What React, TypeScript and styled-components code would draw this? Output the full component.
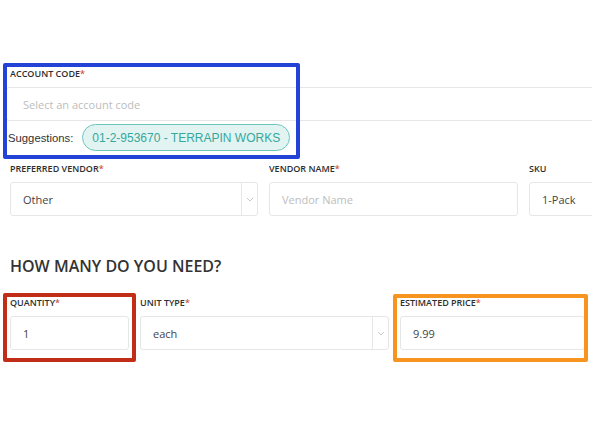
import React from 'react';
import styled, { createGlobalStyle } from 'styled-components';

const GlobalStyle = createGlobalStyle`
  html, body {
    margin: 0;
    padding: 0;
    background: #ffffff;
  }
  body {
    font-family: 'Open Sans', 'Liberation Sans', sans-serif;
    color: #333333;
  }
`;

const Chevron = () => (
  <svg width="8" height="5" viewBox="0 0 8 5" fill="none">
    <path d="M1 1l3 3 3-3" stroke="#c4c4c4" strokeWidth="0.9" />
  </svg>
);

const App = () => (
  <>
    <GlobalStyle />
    <Page>
      <AccountSection>
        <Label>
          Account Code<Req>*</Req>
        </Label>
        <AccountInput>Select an account code</AccountInput>
        <SuggestionRow>
          <SuggestionLabel>Suggestions:</SuggestionLabel>
          <Pill>01-2-953670 - TERRAPIN WORKS</Pill>
        </SuggestionRow>
        <Frame $color="#2342d6" $top={-5} $left={-7} $width={297} $height={96} />
      </AccountSection>

      <Row>
        <Field $width={248}>
          <Label>
            Preferred Vendor<Req>*</Req>
          </Label>
          <Select>
            <Value>Other</Value>
            <Arrow>
              <Chevron />
            </Arrow>
          </Select>
        </Field>
        <Field $width={249}>
          <Label>
            Vendor Name<Req>*</Req>
          </Label>
          <Input $placeholder>Vendor Name</Input>
        </Field>
        <Field $width={249}>
          <Label>SKU</Label>
          <Input>1-Pack</Input>
        </Field>
      </Row>

      <Heading>How many do you need?</Heading>

      <Row>
        <Field $width={119}>
          <Label>
            Quantity<Req>*</Req>
          </Label>
          <Input>1</Input>
          <Frame $color="#c12d17" $top={-4} $left={-7} $width={133} $height={69} />
        </Field>
        <Field $width={249}>
          <Label>
            Unit Type<Req>*</Req>
          </Label>
          <Select>
            <Value>each</Value>
            <Arrow>
              <Chevron />
            </Arrow>
          </Select>
        </Field>
        <Field $width={185}>
          <Label>
            Estimated Price<Req>*</Req>
          </Label>
          <Input>9.99</Input>
          <Frame $color="#f7931f" $top={-3} $left={-7} $width={195} $height={68} />
        </Field>
      </Row>
    </Page>
  </>
);

export default App;

const Page = styled.div`
  width: 592px;
  height: 444px;
  box-sizing: border-box;
  padding: 68px 0 0 10px;
  overflow: hidden;
`;

const AccountSection = styled.section`
  position: relative;
  display: flex;
  flex-direction: column;
`;

const Label = styled.div`
  font-size: 9px;
  font-weight: 600;
  line-height: 12px;
  text-transform: uppercase;
  color: #2e2e2e;
  white-space: nowrap;
  margin-bottom: 7px;
`;

const Req = styled.span`
  color: #d0564a;
`;

const AccountInput = styled.div`
  width: 620px;
  height: 34px;
  margin-left: -4px;
  box-sizing: border-box;
  border: 1px solid #e6e6e6;
  border-radius: 3px;
  padding-left: 16px;
  display: flex;
  align-items: center;
  font-size: 11px;
  color: #bdbdbd;
`;

const SuggestionRow = styled.div`
  display: flex;
  align-items: center;
  gap: 9px;
  margin: 3px 0 0 -2px;
`;

const SuggestionLabel = styled.span`
  font-family: 'Liberation Sans', Arial, sans-serif;
  font-size: 11.3px;
  color: #333333;
`;

const Pill = styled.span`
  height: 27px;
  box-sizing: border-box;
  padding: 0 9px;
  display: flex;
  align-items: center;
  border: 1px solid #6dc4bc;
  border-radius: 14px;
  background: #e2f4f2;
  color: #35a79d;
  font-family: 'Liberation Sans', Arial, sans-serif;
  font-size: 12px;
  white-space: nowrap;
`;

const Frame = styled.div<{ $color: string; $top: number; $left: number; $width: number; $height: number }>`
  position: absolute;
  top: ${(p) => p.$top}px;
  left: ${(p) => p.$left}px;
  width: ${(p) => p.$width}px;
  height: ${(p) => p.$height}px;
  box-sizing: border-box;
  border: 4px solid ${(p) => p.$color};
  border-radius: 2px;
  pointer-events: none;
`;

const Row = styled.div`
  display: flex;
  gap: 11px;
  margin-top: 12px;
`;

const Field = styled.div<{ $width: number }>`
  position: relative;
  flex: 0 0 ${(p) => p.$width}px;
  display: flex;
  flex-direction: column;
`;

const Input = styled.div<{ $placeholder?: boolean }>`
  height: 34px;
  box-sizing: border-box;
  border: 1px solid #e6e6e6;
  border-radius: 3px;
  padding-left: 12px;
  display: flex;
  align-items: center;
  font-size: 11px;
  color: ${(p) => (p.$placeholder ? '#bdbdbd' : '#444444')};
`;

const Select = styled(Input)`
  padding-left: 0;
`;

const Value = styled.span`
  flex: 1;
  padding-left: 12px;
`;

const Arrow = styled.span`
  width: 15px;
  height: 100%;
  border-left: 1px solid #e6e6e6;
  display: flex;
  align-items: center;
  justify-content: center;
`;

const Heading = styled.h2`
  margin: 39px 0 20px;
  font-size: 16px;
  font-weight: 600;
  line-height: 22px;
  text-transform: uppercase;
  color: #333333;
`;
